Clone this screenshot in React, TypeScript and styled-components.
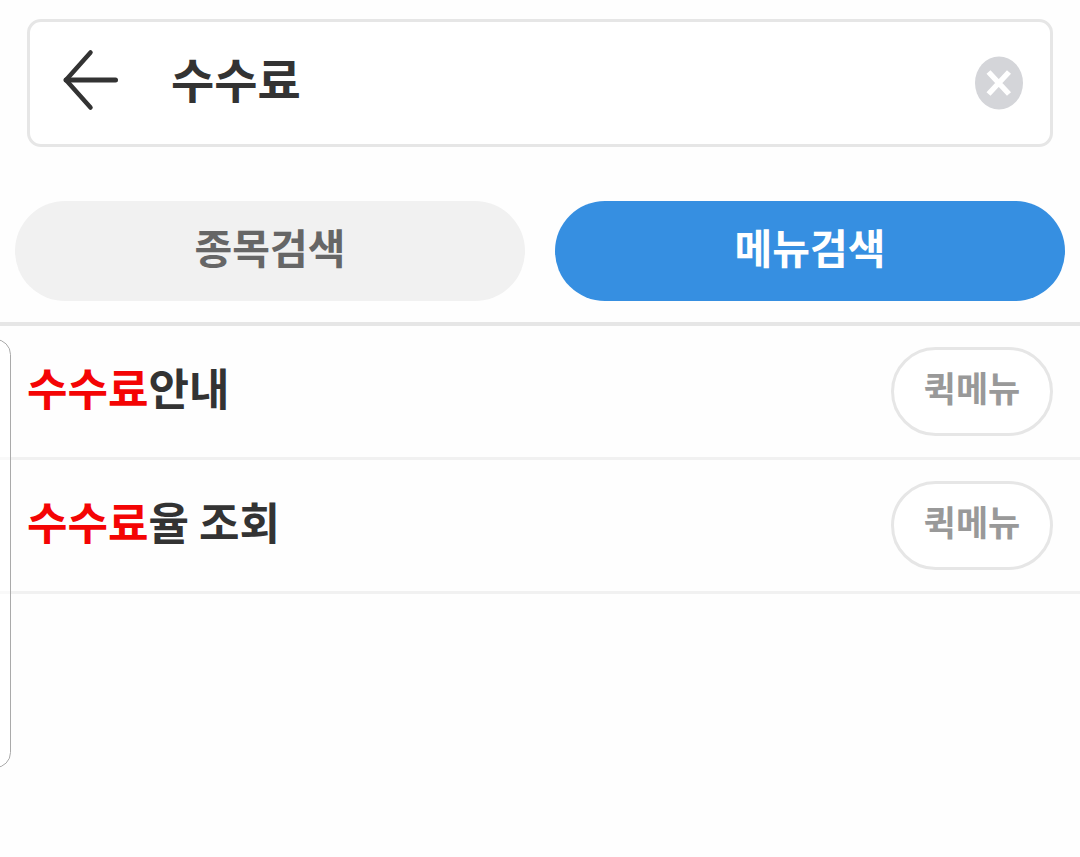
import React, { useState } from "react";
import styled, { createGlobalStyle } from "styled-components";

const GlobalStyle = createGlobalStyle`
  *, *::before, *::after { box-sizing: border-box; }
  body {
    margin: 0;
    background: #fefefe;
    color: #333;
    font-family: "Noto Sans CJK KR", "Noto Sans", sans-serif;
    font-weight: 700;
  }
  button, input { font: inherit; }
`;

const Page = styled.div`
  position: relative;
  min-height: 100vh;
  overflow: hidden;
`;

const Header = styled.header`
  padding: 19px 0 21px;
  border-bottom: 4px solid #e6e6e6;
`;

const SearchBar = styled.form`
  display: flex;
  align-items: center;
  height: 128px;
  margin: 0 27px 54px;
  padding: 0 27px 0 31px;
  border: 3px solid #e6e6e6;
  border-radius: 14px;
  background: #fff;
`;

const IconButton = styled.button`
  display: flex;
  flex: none;
  padding: 0;
  border: 0;
  background: none;
  cursor: pointer;
`;

const BackButton = styled(IconButton)`
  padding-bottom: 6px;
`;

const SearchInput = styled.input`
  flex: 1;
  min-width: 0;
  height: 72px;
  margin: 0 24px 0 52px;
  padding: 0 0 12px;
  border: 0;
  outline: 0;
  background: none;
  color: #333;
  font-size: 47px;
`;

const Tabs = styled.div`
  display: grid;
  grid-template-columns: 1fr 1fr;
  gap: 30px;
  padding: 0 15px;
`;

const Tab = styled.button<{ $active: boolean }>`
  height: 100px;
  padding: 0 0 10px;
  border: 0;
  border-radius: 50px;
  background: ${(p) => (p.$active ? "#368fe1" : "#f1f1f1")};
  color: ${(p) => (p.$active ? "#fff" : "#666")};
  font-size: 41px;
  line-height: 60px;
  cursor: pointer;
`;

const Results = styled.ul`
  margin: 0;
  padding: 0;
  list-style: none;
`;

const Row = styled.li`
  display: flex;
  align-items: center;
  justify-content: space-between;
  min-height: 134px;
  padding: 0 27px;
  border-bottom: 3px solid #f1f1f1;
`;

const MenuLink = styled.a`
  padding-bottom: 10px;
  color: #333;
  font-size: 44px;
  line-height: 64px;
  text-decoration: none;
`;

const Match = styled.span`
  color: #f40404;
`;

const QuickButton = styled.button`
  width: 162px;
  height: 89px;
  padding: 0 0 9px;
  border: 3px solid #e6e6e6;
  border-radius: 45px;
  background: #fff;
  color: #999;
  font-size: 35px;
  line-height: 50px;
  cursor: pointer;
`;

const EdgeHandle = styled.div`
  position: absolute;
  top: 339px;
  left: -20px;
  width: 31px;
  height: 429px;
  border: 1px solid #aaa;
  border-radius: 16px;
  background: rgba(255, 255, 255, 0.6);
  pointer-events: none;
`;

const BackIcon = () => (
  <svg width="58" height="64" viewBox="0 0 58 64" fill="none" stroke="#333" strokeLinecap="round" strokeLinejoin="round" aria-hidden="true">
    <path d="M29.500 4.500 5 32 29.500 59.500" strokeWidth="4.500" />
    <path d="M5 32H54.500" strokeWidth="5" />
  </svg>
);

const ClearIcon = () => (
  <svg width="48" height="54" viewBox="0 0 48 54" aria-hidden="true">
    <ellipse cx="24" cy="27" rx="24" ry="26.500" fill="#d4d5d9" />
    <path d="M13.500 16 34 38M34 16 13.500 38" stroke="#fff" strokeWidth="5.500" />
  </svg>
);

const KEYWORD = "수수료";
const TABS = ["종목검색", "메뉴검색"];
const MENUS = ["수수료안내", "수수료율 조회"];

function Highlighted({ text }: { text: string }) {
  const at = text.indexOf(KEYWORD);
  if (at < 0) return <>{text}</>;
  return (
    <>
      {text.slice(0, at)}
      <Match>{KEYWORD}</Match>
      {text.slice(at + KEYWORD.length)}
    </>
  );
}

export default function App() {
  const [query, setQuery] = useState(KEYWORD);
  const [tab, setTab] = useState(1);

  return (
    <Page>
      <GlobalStyle />
      <Header>
        <SearchBar role="search" onSubmit={(e) => e.preventDefault()}>
          <BackButton type="button" aria-label="뒤로">
            <BackIcon />
          </BackButton>
          <SearchInput
            type="text"
            aria-label="검색어"
            value={query}
            onChange={(e) => setQuery(e.target.value)}
          />
          <IconButton type="button" aria-label="지우기" onClick={() => setQuery("")}>
            <ClearIcon />
          </IconButton>
        </SearchBar>
        <Tabs role="tablist">
          {TABS.map((label, i) => (
            <Tab
              key={label}
              type="button"
              role="tab"
              aria-selected={tab === i}
              $active={tab === i}
              onClick={() => setTab(i)}
            >
              {label}
            </Tab>
          ))}
        </Tabs>
      </Header>
      <Results>
        {MENUS.map((name) => (
          <Row key={name}>
            <MenuLink href="#">
              <Highlighted text={name} />
            </MenuLink>
            <QuickButton type="button">퀵메뉴</QuickButton>
          </Row>
        ))}
      </Results>
      <EdgeHandle />
    </Page>
  );
}
